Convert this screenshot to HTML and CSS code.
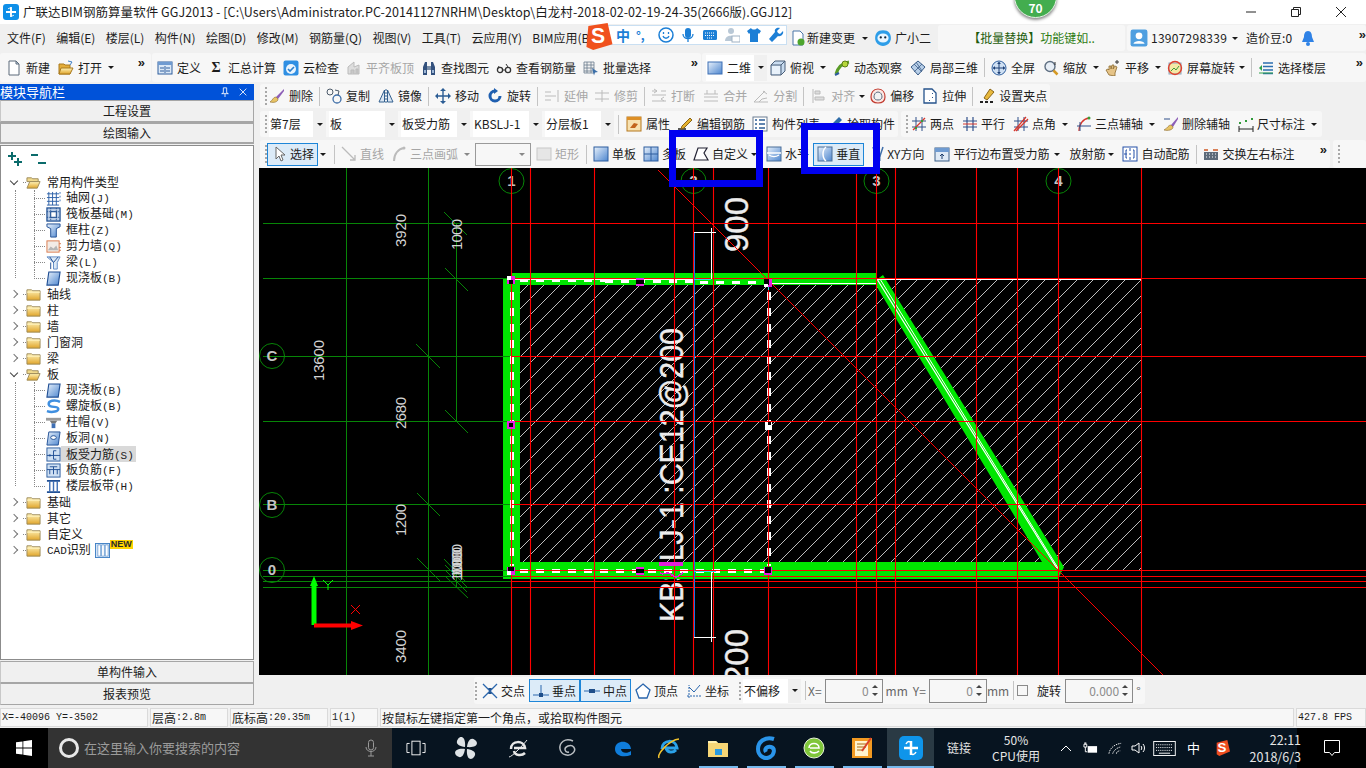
FILE: index.html
```html
<!DOCTYPE html>
<html lang="zh-CN">
<head>
<meta charset="utf-8">
<title>广联达BIM钢筋算量软件 GGJ2013</title>
<link rel="stylesheet" href="styles.css">
</head>
<body>
<svg class="defs" width="0" height="0">
<defs>
<linearGradient id="gy" x1="0" y1="0" x2="0" y2="1"><stop offset="0" stop-color="#fff3b8"/><stop offset="1" stop-color="#e0a52c"/></linearGradient>
<linearGradient id="gb" x1="0" y1="0" x2="1" y2="1"><stop offset="0" stop-color="#e8f1fb"/><stop offset="1" stop-color="#4d86cf"/></linearGradient>
<symbol id="doc" viewBox="0 0 16 16"><path d="M3 1h7l3 3v11H3z" fill="#fff" stroke="#5d6b7a"/><path d="M10 1v3h3z" fill="#c7d8ea" stroke="#5d6b7a"/></symbol>
<symbol id="open" viewBox="0 0 16 16"><path d="M1 4h5l1 1h5v9H1z" fill="#e3ad3a" stroke="#a97a1f"/><path d="M3 8h12l-3 6H1z" fill="url(#gy)" stroke="#a97a1f"/><path d="M10 1l4 1-2 3" fill="none" stroke="#3d7fc4"/></symbol>
<symbol id="def" viewBox="0 0 16 16"><rect x="1" y="2" width="14" height="12" fill="#dbe8f6" stroke="#2f5f9e"/><rect x="1" y="2" width="14" height="3" fill="#6f9bd1"/><path d="M3 8h4M3 11h4M9 8h4M9 11h4M8 6v7" stroke="#2f5f9e"/></symbol>
<symbol id="cloud" viewBox="0 0 16 16"><rect x="0.5" y="0.5" width="15" height="15" rx="2" fill="#2f8fe3"/><circle cx="8" cy="9" r="5" fill="#eaf4fd"/><path d="M5 9l2 2 4-4" fill="none" stroke="#2a7fcc" stroke-width="1.6"/></symbol>
<symbol id="gplane" viewBox="0 0 16 16"><path d="M2 14V7l6-5v5l5-2v9z" fill="#ddd" stroke="#bbb"/><path d="M5 14v-4h3v4M10 14v-5h2v5" fill="#c8c8c8" stroke="#bbb"/></symbol>
<symbol id="binoc" viewBox="0 0 16 16"><path d="M2 15V7l2-5h2v13zM14 15V7l-2-5h-2v13z" fill="#33517d"/><rect x="6" y="6" width="4" height="4" fill="#7a8ea8"/><rect x="3" y="10" width="2" height="3" fill="#9db6d6"/><rect x="11" y="10" width="2" height="3" fill="#9db6d6"/></symbol>
<symbol id="glass" viewBox="0 0 16 16"><circle cx="4" cy="10" r="2.6" fill="none" stroke="#333" stroke-width="1.3"/><circle cx="12" cy="10" r="2.6" fill="none" stroke="#333" stroke-width="1.3"/><path d="M6.5 10h3M12 7l-2-3M1.5 9L3 6" stroke="#333"/></symbol>
<symbol id="batch" viewBox="0 0 16 16"><path d="M1 2h10v11H1zM1 5h10M1 8h10M1 11h10M4 2v11M8 2v11" fill="#f2f2f2" stroke="#6a7b8e" stroke-width=".8"/><path d="M9 8l6 4-3 .5-1 3z" fill="#3a6ea8"/></symbol>
<symbol id="sq" viewBox="0 0 16 16"><rect x="1" y="2" width="14" height="12" fill="url(#gb)" stroke="#3d6fb4"/></symbol>
<symbol id="box3d" viewBox="0 0 16 16"><path d="M1 5l4-4h10v10l-4 4H1z" fill="#c9dcf0" stroke="#4a5f78"/><path d="M1 5h10v10M11 5l4-4" fill="none" stroke="#4a5f78"/><path d="M2 6h8v8H2z" fill="#e8f1fa"/></symbol>
<symbol id="orbit" viewBox="0 0 16 16"><path d="M2 14C4 7 9 3 15 2" fill="none" stroke="#5a9c26" stroke-width="3"/><circle cx="11" cy="4" r="3" fill="#b6d73a" stroke="#5d7d16"/><path d="M1 15l4-2" stroke="#2e5c9e" stroke-width="2"/></symbol>
<symbol id="local3" viewBox="0 0 16 16"><path d="M8 1l7 6-7 8-7-8z" fill="#b8cfe8" stroke="#3b5d88"/><path d="M4 4l8 8M12 4l-8 8M6 2l6 9" stroke="#3b5d88" stroke-width=".8"/></symbol>
<symbol id="full" viewBox="0 0 16 16"><circle cx="8" cy="8" r="7" fill="#cfe0f3" stroke="#2f5f9e"/><path d="M8 2v12M2 8h12" stroke="#1d3f75"/><path d="M8 2l-2 2h4zM8 14l-2-2h4zM2 8l2-2v4zM14 8l-2-2v4z" fill="#1d3f75"/></symbol>
<symbol id="zoomi" viewBox="0 0 16 16"><circle cx="7" cy="6.500" r="5" fill="#e7eef6" stroke="#5f6f82" stroke-width="1.400"/><path d="M10.500 10.500l4 4" stroke="#d59a25" stroke-width="2.500"/><path d="M12 2v3" stroke="#333"/></symbol>
<symbol id="pan" viewBox="0 0 16 16"><path d="M4 15l-3-5 2-1 1 1V6h2v3l1-4h2l-1 4 2-3 2 1-2 6v3z" fill="#e6c488" stroke="#8c6a2e" stroke-width=".8"/><path d="M12 0v4M10 2h4" stroke="#333"/></symbol>
<symbol id="rot" viewBox="0 0 16 16"><rect x="2" y="3" width="12" height="11" fill="#f4e9a6" stroke="#8ba2bc"/><circle cx="8" cy="8" r="6.500" fill="none" stroke="#e0402c" stroke-width="1.400"/><path d="M4 11l3-3 2 2 3-4" stroke="#3f9b3a" fill="none"/></symbol>
<symbol id="floor" viewBox="0 0 16 16"><path d="M5 3h10M5 6.500h10M5 10h10M5 13.500h10" stroke="#2c6fb0" stroke-width="1.600"/><path d="M1 8l3-3v6z" fill="#2fa04a"/><path d="M1 13h14" stroke="#2fa04a"/></symbol>
<symbol id="brush" viewBox="0 0 16 16"><path d="M15 1L7 9l2 2 6-8z" fill="#8d5fb7"/><path d="M7 9c-3 0-3 3-6 5 4 1 8 0 8-3z" fill="#e8c465" stroke="#8c6a2e" stroke-width=".6"/></symbol>
<symbol id="copy" viewBox="0 0 16 16"><circle cx="4" cy="4" r="3" fill="none" stroke="#4c5a6a"/><circle cx="11" cy="11" r="4" fill="none" stroke="#3f6ea8" stroke-width="1.300"/><path d="M9 2l4 1-1 4" fill="none" stroke="#4c5a6a"/></symbol>
<symbol id="mirror" viewBox="0 0 16 16"><path d="M6.500 2v12H1zM9.500 2v12H15z" fill="#dbe7f4" stroke="#33608f"/><path d="M8 1v14" stroke="#33608f" stroke-dasharray="2 1"/></symbol>
<symbol id="move" viewBox="0 0 16 16"><path d="M8 1v14M1 8h14" stroke="#2b5c94" stroke-width="1.400"/><path d="M8 0l-3 3h6zM8 16l-3-3h6zM0 8l3-3v6zM16 8l-3-3v6z" fill="#2b5c94"/></symbol>
<symbol id="rotate" viewBox="0 0 16 16"><path d="M13 8a5 5 0 1 1-5-5" fill="none" stroke="#1f5fb0" stroke-width="3"/><path d="M7 0v6l4-3z" fill="#1f5fb0"/></symbol>
<symbol id="gext" viewBox="0 0 16 16"><path d="M1 4h6M1 12h6M1 8h11M14 2v12" stroke="#bbb" fill="none"/></symbol>
<symbol id="gtrim" viewBox="0 0 16 16"><path d="M1 5h14M1 11h14M8 2v12" stroke="#bbb"/></symbol>
<symbol id="gbreak" viewBox="0 0 16 16"><path d="M1 3h5M10 3h5M1 7h14M3 1l3 2-3 2M13 9l-3 2 3 2M1 13h14" stroke="#bbb" fill="none"/></symbol>
<symbol id="gmerge" viewBox="0 0 16 16"><path d="M1 6h14M1 13h14M4 2v4M12 2v4M1 9h14" stroke="#bbb" fill="none"/></symbol>
<symbol id="gsplit" viewBox="0 0 16 16"><path d="M1 14L12 3M1 14h14M6 14l3-3 5-1" stroke="#bbb" fill="none"/><path d="M10 3l4 3" stroke="#bbb"/></symbol>
<symbol id="galign" viewBox="0 0 16 16"><path d="M2 1v14" stroke="#bbb"/><path d="M4 3h5v3H4zM4 9h9v3H4z" fill="#ddd" stroke="#bbb"/></symbol>
<symbol id="offset" viewBox="0 0 16 16"><path d="M8 1c5 0 7 4 7 8s-3 6-7 6-7-2-7-6 2-8 7-8z" fill="#fbe7e3" stroke="#c23b30" stroke-width="1.200"/><path d="M8 4c3 0 4 3 4 5s-2 3-4 3-4-1-4-3 1-5 4-5z" fill="#f2f2f2" stroke="#5b6d80"/></symbol>
<symbol id="stretch" viewBox="0 0 16 16"><path d="M2 1h8l4 4v10H2z" fill="#fff" stroke="#26538c" stroke-width="1.300"/><path d="M10 5h1v1H10zM10 9h1v1H10zM7 12h1v1H7z" fill="#26538c"/></symbol>
<symbol id="grip" viewBox="0 0 16 16"><path d="M11 1l4 3-7 8-3-2z" fill="#e8b93e" stroke="#8a6518"/><path d="M1 14h3M6 14h3M11 14h3" stroke="#222" stroke-width="2"/></symbol>
<symbol id="attr" viewBox="0 0 16 16"><rect x="1" y="1" width="14" height="14" fill="#f7e1b0" stroke="#b5791f"/><path d="M1 1h14v3H1z" fill="#dd8f26"/><path d="M4 12l4-5 4 1-3 4z" fill="#c2641d"/></symbol>
<symbol id="editbar" viewBox="0 0 16 16"><path d="M1 13h8" stroke="#222" stroke-width="1.500"/><path d="M13 2l2 2-8 8-3 1 1-3z" fill="#e7b32e" stroke="#8a6518"/></symbol>
<symbol id="list" viewBox="0 0 16 16"><rect x="1" y="1" width="14" height="14" fill="#fff" stroke="#6a7d92"/><path d="M3 4h2M3 8h2M3 12h2M7 4h6M7 8h6M7 12h6" stroke="#2c5d97" stroke-width="1.500"/></symbol>
<symbol id="pick" viewBox="0 0 16 16"><path d="M12 1l3 3-6 6-3-3z" fill="#2e6ca8"/><path d="M7 8l-4 6 6-4z" fill="#d7a236"/></symbol>
<symbol id="twopt" viewBox="0 0 16 16"><path d="M1 5h14M1 11h14M5 1v14M11 1v14" stroke="#31508a"/><path d="M2 14L14 2" stroke="#d8372c" stroke-width="1.200"/><path d="M4 11h2v2H4zM10 4h2v2h-2z" fill="#3b9c34"/></symbol>
<symbol id="para" viewBox="0 0 16 16"><path d="M1 5h14M1 11h14M5 1v14M11 1v14" stroke="#31508a" stroke-width="1.200"/><path d="M1 8h14" stroke="#d8372c"/></symbol>
<symbol id="angle" viewBox="0 0 16 16"><path d="M1 5h14M1 11h14M5 1v14M11 1v14" stroke="#31508a"/><path d="M1 15L13 1M3 15L15 3" stroke="#d8372c" stroke-width="1.300"/></symbol>
<symbol id="arcaxis" viewBox="0 0 16 16"><path d="M3 15C3 8 7 3 13 2" fill="none" stroke="#d8372c" stroke-width="1.300"/><path d="M1 10h14M4 6v9" stroke="#31508a"/><circle cx="13" cy="2" r="1.500" fill="#3b9c34"/></symbol>
<symbol id="delaxis" viewBox="0 0 16 16"><path d="M15 1L8 9l2 2 5-8z" fill="#8d5fb7"/><path d="M8 9c-3 0-3 3-7 5 4 1 9 0 9-3z" fill="#e8c465" stroke="#8c6a2e" stroke-width=".6"/><path d="M1 3h6" stroke="#31508a"/></symbol>
<symbol id="dimen" viewBox="0 0 16 16"><path d="M1 13h14M1 10v6M15 10v6" stroke="#222"/><path d="M1 6h2v2H1zM13 2h2v2h-2zM7 4h2v2H7z" fill="#2f9a3a"/></symbol>
<symbol id="arrowsel" viewBox="0 0 16 16"><path d="M5 1v12l3-3 2 5 2-1-2-5h4z" fill="#fff" stroke="#666"/></symbol>
<symbol id="gline" viewBox="0 0 16 16"><path d="M1 1l13 13M14 9v5H9" fill="none" stroke="#bbb" stroke-width="1.300"/></symbol>
<symbol id="garc" viewBox="0 0 16 16"><path d="M3 15C3 8 7 3 13 2" fill="none" stroke="#bbb" stroke-width="2"/><circle cx="13" cy="2" r="1.500" fill="#bbb"/></symbol>
<symbol id="grect" viewBox="0 0 16 16"><rect x="1" y="2" width="14" height="12" fill="#e6e6e6" stroke="#c8c8c8"/></symbol>
<symbol id="single" viewBox="0 0 16 16"><rect x="1" y="1" width="14" height="14" fill="url(#gb)" stroke="#2c5d9e"/></symbol>
<symbol id="multi" viewBox="0 0 16 16"><rect x="1" y="1" width="14" height="14" fill="url(#gb)" stroke="#2c5d9e"/><path d="M8 1v14M1 8h14" stroke="#2c5d9e"/></symbol>
<symbol id="custom" viewBox="0 0 16 16"><path d="M5 2h9l-3 5 4 7H1z" fill="#fff" stroke="#223" stroke-width="1.200"/></symbol>
<symbol id="horiz" viewBox="0 0 16 16"><rect x="1" y="1" width="14" height="14" fill="url(#gb)" stroke="#4b6e98"/><path d="M1 7h14M3 9c3 2 7 2 10 0" fill="none" stroke="#fff" stroke-width="1.300"/></symbol>
<symbol id="vert" viewBox="0 0 16 16"><rect x="1" y="1" width="14" height="14" fill="url(#gb)" stroke="#4b6e98"/><path d="M9 1C5 4 5 12 9 15" fill="none" stroke="#fff" stroke-width="1.500"/></symbol>
<symbol id="xy" viewBox="0 0 16 16"><path d="M3 1l3 9h4l3-9" fill="none" stroke="#3f6ea8" stroke-width="1.500"/><path d="M6 10v5M10 10v5" stroke="#3f6ea8"/></symbol>
<symbol id="pedge" viewBox="0 0 16 16"><rect x="1" y="2" width="14" height="13" fill="#dfeaf6" stroke="#3a5f88"/><rect x="1" y="2" width="14" height="4" fill="#6f9bd1"/><path d="M8 13V8M6 10l2-2 2 2" fill="none" stroke="#1f3f6c"/></symbol>
<symbol id="autob" viewBox="0 0 16 16"><rect x="1" y="1" width="14" height="14" fill="#fff" stroke="#2450a8"/><path d="M5 4H4v8h1M11 4h1v8h-1M8 2v3M8 7v2M8 11v3M2 8h3" fill="none" stroke="#2450a8"/></symbol>
<symbol id="swap" viewBox="0 0 16 16"><rect x="1" y="6" width="14" height="8" fill="#5d6b7a"/><path d="M3 8h1M6 8h1M9 8h1M12 8h1M3 11h1M6 11h1M9 11h1M12 11h1" stroke="#fff"/><path d="M1 4h4M10 4h5" stroke="#d05a24" stroke-width="1.400"/></symbol>
<symbol id="xpt" viewBox="0 0 16 16"><path d="M1 1l14 14M15 1L1 15" stroke="#2a66ad" stroke-width="1.300"/><path d="M6 5h4l-2 3zM6 11h4l-2-3z" fill="#1f4f8a"/></symbol>
<symbol id="ppt" viewBox="0 0 16 16"><path d="M0 12h16M8 2v10" stroke="#2a66ad"/><rect x="6" y="10" width="4" height="4" fill="#1f4f8a"/></symbol>
<symbol id="mpt" viewBox="0 0 16 16"><path d="M0 8h16" stroke="#2a66ad"/><rect x="5" y="6" width="6" height="4" fill="#1f4f8a"/></symbol>
<symbol id="tpt" viewBox="0 0 16 16"><path d="M8 1l7 6-3 8H4L1 7z" fill="#fff" stroke="#2a66ad" stroke-width="1.300"/></symbol>
<symbol id="cpt" viewBox="0 0 16 16"><path d="M3 15V2M1 13h14" stroke="#2a66ad" stroke-dasharray="2 1"/><path d="M8 9l6-7M8 9l-5-5" stroke="#2a66ad"/></symbol>
<symbol id="fclosed" viewBox="0 0 16 16"><path d="M1 3h5l1 1h8v10H1z" fill="url(#gy)" stroke="#9c8a5a"/><path d="M1 5.500h14" stroke="#fff4c4"/></symbol>
<symbol id="fopen" viewBox="0 0 16 16"><path d="M1 3h5l1 1h6v3H1z" fill="#f0d98c" stroke="#9c8a5a"/><path d="M4 7h11l-3 7H1z" fill="url(#gy)" stroke="#9c8a5a"/></symbol>
<symbol id="tgrid" viewBox="0 0 16 16"><path d="M1 3h13M1 7h13M1 11h13M1 15h13M3 1v14M7 1v14M11 1v14" stroke="#2b5fa8"/><path d="M14 1h2v2h-2zM14 5h2v2h-2zM14 9h2v2h-2z" fill="#9cb8dc"/></symbol>
<symbol id="traft" viewBox="0 0 16 16"><rect x="1" y="1" width="14" height="14" fill="#b9cde8" stroke="#1d4d90" stroke-width="1.300"/><rect x="5" y="5" width="6" height="6" fill="#fff" stroke="#1d4d90"/><path d="M1 5h14M1 11h14M5 1v14M11 1v14" stroke="#1d4d90" stroke-dasharray="1 1"/></symbol>
<symbol id="tcol" viewBox="0 0 16 16"><path d="M1 1h14v3l-4 2v9H5V6L1 4z" fill="url(#gb)" stroke="#204f94"/></symbol>
<symbol id="twall" viewBox="0 0 16 16"><rect x="1" y="2" width="13" height="12" fill="#f2ebe6" stroke="#d8784a"/><path d="M2 12l3-4 3 2 3-3 2 5z" fill="#b5b5b5"/><path d="M14 5h2M14 9h2M14 12h2" stroke="#d8784a"/></symbol>
<symbol id="tbeam" viewBox="0 0 16 16"><path d="M1 2h14l-3 6v7H8V8z" fill="#dbe8f6" stroke="#5d8ac4"/><path d="M4 2l4 6M13 2l-5 6M5 8v7" stroke="#204f94"/></symbol>
<symbol id="tslab" viewBox="0 0 16 16"><path d="M3 1h12l-2 14H1z" fill="url(#gb)" stroke="#204f94" stroke-width="1.200"/></symbol>
<symbol id="tspiral" viewBox="0 0 16 16"><path d="M15 3C9 0 2 2 3 6s9 1 10 4-6 5-12 3" fill="none" stroke="#3f8fe0" stroke-width="2.600"/></symbol>
<symbol id="tcap" viewBox="0 0 16 16"><path d="M0 3h16v3H0z" fill="#9b9b9b"/><path d="M4 6h8l-2 3H6z" fill="#777"/><rect x="6" y="9" width="4" height="5" fill="#3f6fb4"/></symbol>
<symbol id="thole" viewBox="0 0 16 16"><path d="M3 1h12l-2 14H1z" fill="url(#gb)" stroke="#204f94"/><ellipse cx="8" cy="7" rx="3" ry="2" fill="#fff" stroke="#204f94"/></symbol>
<symbol id="tbar" viewBox="0 0 16 16"><rect x="1" y="1" width="14" height="14" fill="#cfe0f3" stroke="#2c5d9e"/><path d="M1 9h14M11 4H8v9h3" fill="none" stroke="#204f94"/><path d="M3 9h2" stroke="#204f94" stroke-width="2"/></symbol>
<symbol id="tneg" viewBox="0 0 16 16"><rect x="1" y="1" width="14" height="14" fill="#cfe0f3" stroke="#2c5d9e"/><path d="M1 7h14M4 4h8M4 7v5M12 7v5M8 4v8" fill="none" stroke="#204f94"/></symbol>
<symbol id="tband" viewBox="0 0 16 16"><path d="M1 2h14M1 14h14" stroke="#204f94" stroke-width="2"/><path d="M4 2v12M8 2v12M12 2v12" stroke="#3f6fb4" stroke-width="1.500"/></symbol>
<symbol id="tcad" viewBox="0 0 16 16"><rect x=".5" y=".5" width="15" height="15" fill="#d6e6f7" stroke="#3f7fc4"/><path d="M3 2v12h3V2zM7 2v12h3V2zM11 2v12h3V2z" fill="#fff" stroke="#3f7fc4" stroke-width=".6"/></symbol>
</defs>
</svg>

<div class="page">
  <header class="titlebar">
    <svg class="appicon" viewBox="0 0 16 16"><rect width="16" height="16" rx="3" fill="#0e8fe8"/><path d="M8 3v10M3 8h10" stroke="#fff" stroke-width="1.800"/><path d="M5 5c2-2 4 0 3 2M11 11c-2 2-4 0-3-2" fill="none" stroke="#fff"/></svg>
    <span class="title-text">广联达BIM钢筋算量软件 GGJ2013 - [C:\Users\Administrator.PC-20141127NRHM\Desktop\白龙村-2018-02-02-19-24-35(2666版).GGJ12]</span>
    <div class="winctl">
      <svg class="wc" viewBox="0 0 12 12"><path d="M1 6h10" stroke="#222"/></svg>
      <svg class="wc" viewBox="0 0 12 12"><path d="M1.500 3.500h7v7h-7zM3.500 3.500v-2h7v7h-2" fill="none" stroke="#222"/></svg>
      <svg class="wc" viewBox="0 0 12 12"><path d="M1 1l10 10M11 1L1 11" stroke="#222"/></svg>
    </div>
    <div class="badge"><span>70</span></div>
  </header>

  <nav class="menubar">
    <div class="menus">
      <span>文件(F)</span><span>编辑(E)</span><span>楼层(L)</span><span>构件(N)</span><span>绘图(D)</span><span>修改(M)</span><span>钢筋量(Q)</span><span>视图(V)</span><span>工具(T)</span><span>云应用(Y)</span><span>BIM应用(B)</span>
    </div>
    <div class="menu-right">
      <div class="tool newchg"><svg class="ic" viewBox="0 0 16 16"><path d="M3 1h7l3 3v11H3z" fill="#fff" stroke="#4b76a8"/><circle cx="11" cy="12" r="3.500" fill="#4da52c"/></svg><span>新建变更</span><i class="dd"></i></div>
      <div class="tool xiaoer"><svg class="ic big" viewBox="0 0 16 16"><path d="M8 1c5 0 7 3 7 7s-3 7-7 7-7-3-7-7 2-7 7-7z" fill="#2d9de8"/><ellipse cx="8" cy="8" rx="5" ry="4" fill="#eaf6ff"/><circle cx="6" cy="7.500" r="1" fill="#123"/><circle cx="10" cy="7.500" r="1" fill="#123"/></svg><span>广小二</span></div>
      <div class="notice"><b>【批量替换】</b>功能键如..</div>
      <div class="account">
        <svg class="ic big" viewBox="0 0 16 16"><rect x=".5" y=".5" width="15" height="15" rx="2" fill="#4f9fe0"/><circle cx="8" cy="6" r="3" fill="#fff"/><path d="M3 13c1-3 9-3 10 0z" fill="#fff"/></svg>
        <span class="phone">13907298339</span><i class="dd"></i>
        <span class="beans">造价豆:0</span>
        <svg class="bell" viewBox="0 0 12 16"><path d="M6 1c3 0 4 3 4 6l2 5H0l2-5c0-3 1-6 4-6z" fill="#2f82e6"/><circle cx="6" cy="14" r="2" fill="#2f82e6"/></svg>
        <span class="more">»</span>
      </div>
    </div>
    <div class="ime">
      <svg class="ime-s" viewBox="0 0 30 28"><path d="M5 3l20-3 5 22-20 6-7-3z" fill="#f0511e"/><text x="15" y="21" class="ime-s-t">S</text></svg>
      <span class="ime-zh">中</span><span class="ime-p">°,</span>
      <svg class="ime-i" viewBox="0 0 16 16"><circle cx="8" cy="8" r="7" fill="none" stroke="#1c7fd6" stroke-width="1.500"/><path d="M5 9c1 3 5 3 6 0" fill="none" stroke="#1c7fd6" stroke-width="1.300"/><path d="M5.500 5v2M10.500 5v2" stroke="#1c7fd6" stroke-width="1.300"/></svg>
      <svg class="ime-i" viewBox="0 0 16 16"><rect x="5" y="1" width="6" height="10" rx="3" fill="#1c7fd6"/><path d="M3 7c0 6 10 6 10 0M8 12v3" fill="none" stroke="#1c7fd6" stroke-width="1.300"/></svg>
      <svg class="ime-i" viewBox="0 0 16 16"><rect x="1" y="3" width="14" height="10" rx="1.500" fill="#1c7fd6"/><path d="M3 6h10M3 8.500h10M5 11h6" stroke="#fff" stroke-dasharray="1 1"/></svg>
      <svg class="ime-i" viewBox="0 0 16 16"><circle cx="7" cy="4" r="3" fill="#b9c8d6"/><path d="M1 14c0-7 11-7 11 0z" fill="#b9c8d6"/><rect x="8" y="9" width="8" height="6" fill="#fff" stroke="#9fb1c3"/></svg>
      <svg class="ime-i" viewBox="0 0 16 16"><path d="M5 1L1 4l2 3 1-1v9h8V6l1 1 2-3-4-3c-1 2-5 2-6 0z" fill="#1c7fd6"/></svg>
      <svg class="ime-i" viewBox="0 0 16 16"><path d="M15 4l-3 3-2-1-1-2 3-3c-3-1-6 1-5 4L1 12l3 3 6-6c3 1 6-2 5-5z" fill="#1c7fd6"/></svg>
    </div>
  </nav>

  <div class="toolbar-top">
    <div class="chip c1">
      <div class="tool"><svg class="ic"><use href="#doc"/></svg><span>新建</span></div>
      <div class="tool"><svg class="ic"><use href="#open"/></svg><span>打开</span><i class="dd"></i></div>
      <span class="more">»</span>
    </div>
    <div class="chip c2">
      <div class="tool"><svg class="ic"><use href="#def"/></svg><span>定义</span></div>
      <div class="tool"><span class="sigma">Σ</span><span>汇总计算</span></div>
      <div class="tool"><svg class="ic"><use href="#cloud"/></svg><span>云检查</span></div>
      <div class="tool off"><svg class="ic"><use href="#gplane"/></svg><span>平齐板顶</span></div>
      <div class="tool"><svg class="ic"><use href="#binoc"/></svg><span>查找图元</span></div>
      <div class="tool"><svg class="ic"><use href="#glass"/></svg><span>查看钢筋量</span></div>
      <div class="tool"><svg class="ic"><use href="#batch"/></svg><span>批量选择</span></div>
      <span class="more">»</span>
    </div>
    <div class="chip c3">
      <div class="tool sel2d"><svg class="ic"><use href="#sq"/></svg><span>二维</span></div><span class="ddbox"><i class="dd"></i></span>
      <div class="tool"><svg class="ic"><use href="#box3d"/></svg><span>俯视</span><i class="dd"></i></div>
      <div class="tool"><svg class="ic"><use href="#orbit"/></svg><span>动态观察</span></div>
      <div class="tool"><svg class="ic"><use href="#local3"/></svg><span>局部三维</span></div>
      <i class="sep"></i>
      <div class="tool"><svg class="ic"><use href="#full"/></svg><span>全屏</span></div>
      <div class="tool"><svg class="ic"><use href="#zoomi"/></svg><span>缩放</span><i class="dd"></i></div>
      <div class="tool mln2"><svg class="ic"><use href="#pan"/></svg><span>平移</span><i class="dd"></i></div>
      <div class="tool mln2"><svg class="ic"><use href="#rot"/></svg><span>屏幕旋转</span><i class="dd tight"></i></div>
      <i class="sep"></i>
      <div class="tool"><svg class="ic"><use href="#floor"/></svg><span>选择楼层</span></div>
      <span class="more">»</span>
    </div>
  </div>

  <main class="main">
    <aside class="left">
      <div class="panel-head"><span>模块导航栏</span>
        <svg class="pin" viewBox="0 0 12 12"><path d="M4 1h4v6l2 1H2l2-1zM6 8v4" fill="none" stroke="#fff"/></svg>
        <svg class="pin" viewBox="0 0 12 12"><path d="M2 2l8 8M10 2l-8 8" stroke="#fff"/></svg>
      </div>
      <button class="nav-btn">工程设置</button>
      <button class="nav-btn cur">绘图输入</button>
      <div class="treebox">
        <div class="tree-tools">
          <svg class="tt" viewBox="0 0 16 16"><path d="M5 1v8M1 5h8M11 7v8M7 11h8" stroke="#0b6b6b" stroke-width="2"/></svg>
          <svg class="tt" viewBox="0 0 16 16"><path d="M1 4h7M8 12h8" stroke="#0b6b6b" stroke-width="2"/></svg>
        </div>
        <div class="tree">
          <div class="row folder"><i class="chev down"></i><svg class="ti"><use href="#fopen"/></svg><span>常用构件类型</span></div>
          <div class="group">
            <div class="row child"><svg class="ti"><use href="#tgrid"/></svg><span>轴网<em>(J)</em></span></div>
            <div class="row child"><svg class="ti"><use href="#traft"/></svg><span>筏板基础<em>(M)</em></span></div>
            <div class="row child"><svg class="ti"><use href="#tcol"/></svg><span>框柱<em>(Z)</em></span></div>
            <div class="row child"><svg class="ti"><use href="#twall"/></svg><span>剪力墙<em>(Q)</em></span></div>
            <div class="row child"><svg class="ti"><use href="#tbeam"/></svg><span>梁<em>(L)</em></span></div>
            <div class="row child last"><svg class="ti"><use href="#tslab"/></svg><span>现浇板<em>(B)</em></span></div>
          </div>
          <div class="row folder"><i class="chev"></i><svg class="ti"><use href="#fclosed"/></svg><span>轴线</span></div>
          <div class="row folder"><i class="chev"></i><svg class="ti"><use href="#fclosed"/></svg><span>柱</span></div>
          <div class="row folder"><i class="chev"></i><svg class="ti"><use href="#fclosed"/></svg><span>墙</span></div>
          <div class="row folder"><i class="chev"></i><svg class="ti"><use href="#fclosed"/></svg><span>门窗洞</span></div>
          <div class="row folder"><i class="chev"></i><svg class="ti"><use href="#fclosed"/></svg><span>梁</span></div>
          <div class="row folder"><i class="chev down"></i><svg class="ti"><use href="#fopen"/></svg><span>板</span></div>
          <div class="group">
            <div class="row child"><svg class="ti"><use href="#tslab"/></svg><span>现浇板<em>(B)</em></span></div>
            <div class="row child"><svg class="ti"><use href="#tspiral"/></svg><span>螺旋板<em>(B)</em></span></div>
            <div class="row child"><svg class="ti"><use href="#tcap"/></svg><span>柱帽<em>(V)</em></span></div>
            <div class="row child"><svg class="ti"><use href="#thole"/></svg><span>板洞<em>(N)</em></span></div>
            <div class="row child hl"><svg class="ti"><use href="#tbar"/></svg><span>板受力筋<em>(S)</em></span></div>
            <div class="row child"><svg class="ti"><use href="#tneg"/></svg><span>板负筋<em>(F)</em></span></div>
            <div class="row child last"><svg class="ti"><use href="#tband"/></svg><span>楼层板带<em>(H)</em></span></div>
          </div>
          <div class="row folder"><i class="chev"></i><svg class="ti"><use href="#fclosed"/></svg><span>基础</span></div>
          <div class="row folder"><i class="chev"></i><svg class="ti"><use href="#fclosed"/></svg><span>其它</span></div>
          <div class="row folder"><i class="chev"></i><svg class="ti"><use href="#fclosed"/></svg><span>自定义</span></div>
          <div class="row folder"><i class="chev"></i><svg class="ti"><use href="#fclosed"/></svg><span><em>CAD</em>识别</span><svg class="ti cad"><use href="#tcad"/></svg><b class="new">NEW</b></div>
        </div>
      </div>
      <button class="nav-btn foot">单构件输入</button>
      <button class="nav-btn foot">报表预览</button>
    </aside>

    <section class="right">
      <div class="chip rowa">
        <i class="gripper"></i>
        <div class="tool"><svg class="ic"><use href="#brush"/></svg><span>删除</span></div><i class="sep"></i>
        <div class="tool"><svg class="ic"><use href="#copy"/></svg><span>复制</span></div>
        <div class="tool"><svg class="ic"><use href="#mirror"/></svg><span>镜像</span></div><i class="sep"></i>
        <div class="tool"><svg class="ic"><use href="#move"/></svg><span>移动</span></div>
        <div class="tool"><svg class="ic"><use href="#rotate"/></svg><span>旋转</span></div><i class="sep"></i>
        <div class="tool off"><svg class="ic"><use href="#gext"/></svg><span>延伸</span></div>
        <div class="tool off mln2"><svg class="ic"><use href="#gtrim"/></svg><span>修剪</span></div><i class="sep"></i>
        <div class="tool off"><svg class="ic"><use href="#gbreak"/></svg><span>打断</span></div>
        <div class="tool off"><svg class="ic"><use href="#gmerge"/></svg><span>合并</span></div>
        <div class="tool off mln2"><svg class="ic"><use href="#gsplit"/></svg><span>分割</span></div><i class="sep"></i>
        <div class="tool off ml1"><svg class="ic"><use href="#galign"/></svg><span>对齐</span><i class="dd tight"></i></div>
        <div class="tool mln3"><svg class="ic"><use href="#offset"/></svg><span>偏移</span></div>
        <div class="tool"><svg class="ic"><use href="#stretch"/></svg><span>拉伸</span></div><i class="sep"></i>
        <div class="tool"><svg class="ic"><use href="#grip"/></svg><span>设置夹点</span></div>
      </div>

      <div class="rowb">
        <div class="chip rowb1">
          <i class="gripper"></i>
          <div class="combo"><span>第7层</span><span class="ddbox"><i class="dd"></i></span></div>
          <div class="combo wide"><span>板</span><span class="ddbox"><i class="dd"></i></span></div>
          <div class="combo wide"><span>板受力筋</span><span class="ddbox"><i class="dd"></i></span></div>
          <div class="combo wide"><span>KBSLJ-1</span><span class="ddbox"><i class="dd"></i></span></div>
          <div class="combo wide"><span>分层板1</span><span class="ddbox"><i class="dd"></i></span></div>
          <i class="sep b"></i>
          <div class="tool"><svg class="ic"><use href="#attr"/></svg><span>属性</span></div>
          <div class="tool"><svg class="ic"><use href="#editbar"/></svg><span>编辑钢筋</span></div>
          <div class="tool"><svg class="ic"><use href="#list"/></svg><span>构件列表</span></div>
          <div class="tool"><svg class="ic"><use href="#pick"/></svg><span>拾取构件</span></div>
        </div>
        <div class="chip rowb2">
          <i class="gripper"></i>
          <div class="tool"><svg class="ic"><use href="#twopt"/></svg><span>两点</span></div>
          <div class="tool"><svg class="ic"><use href="#para"/></svg><span>平行</span></div>
          <div class="tool"><svg class="ic"><use href="#angle"/></svg><span>点角</span><i class="dd"></i></div>
          <div class="tool"><svg class="ic"><use href="#arcaxis"/></svg><span>三点辅轴</span><i class="dd"></i></div>
          <div class="tool"><svg class="ic"><use href="#delaxis"/></svg><span>删除辅轴</span></div>
          <div class="tool"><svg class="ic"><use href="#dimen"/></svg><span>尺寸标注</span><i class="dd"></i></div>
        </div>
      </div>

      <div class="rowc">
        <div class="chip rowc1">
          <i class="gripper"></i>
          <div class="tool btn sel first"><svg class="ic"><use href="#arrowsel"/></svg><span>选择</span></div><i class="dd"></i>
          <i class="sep"></i>
          <div class="tool off"><svg class="ic"><use href="#gline"/></svg><span>直线</span></div>
          <div class="tool off"><svg class="ic"><use href="#garc"/></svg><span>三点画弧</span><i class="dd grey"></i></div>
          <div class="blank"><i class="dd grey"></i></div>
          <div class="tool off"><svg class="ic"><use href="#grect"/></svg><span>矩形</span></div><i class="sep"></i>
          <div class="tool"><svg class="ic"><use href="#single"/></svg><span>单板</span></div>
          <div class="tool"><svg class="ic"><use href="#multi"/></svg><span>多板</span></div>
          <div class="tool"><svg class="ic"><use href="#custom"/></svg><span>自定义</span><i class="dd tight"></i></div>
          <div class="tool ml2"><svg class="ic"><use href="#horiz"/></svg><span>水平</span></div>
          <div class="tool btn sel vbtn"><svg class="ic"><use href="#vert"/></svg><span>垂直</span></div>
          <div class="tool"><svg class="ic xyic"><use href="#xy"/></svg><span>XY方向</span></div>
          <div class="tool ml3"><svg class="ic"><use href="#pedge"/></svg><span>平行边布置受力筋</span><i class="dd"></i></div>
          <div class="tool ml2"><span>放射筋</span><i class="dd tight"></i></div>
          <div class="tool ml1"><svg class="ic"><use href="#autob"/></svg><span>自动配筋</span></div><i class="sep"></i>
          <div class="tool"><svg class="ic"><use href="#swap"/></svg><span>交换左右标注</span></div>
          <span class="more">»</span>
        </div>
        <div class="chip rowc2"><i class="gripper"></i></div>
      </div>

      <svg class="canvas" viewBox="259 168 1107 507">
        <defs>
          <pattern id="hatch" patternUnits="userSpaceOnUse" width="16" height="16" patternTransform="translate(13 0)"><path class="crisp" d="M-1 17L17 -1M-1 1L1 -1M15 17L17 15" stroke="#bdbdbd" stroke-width="1"/></pattern>
        </defs>
        <rect x="259" y="168" width="1107" height="507" fill="#000"/>
        <path d="M511 279H1141V570H511z" fill="url(#hatch)"/>
        <text class="bigt" transform="translate(683 622) rotate(-90)" textLength="294" lengthAdjust="spacingAndGlyphs">KBSLJ-1 :CE12@200</text>
        <text class="bigt" transform="translate(748 252) rotate(-90)">900</text>
        <text class="bigt" transform="translate(748 684) rotate(-90)">200</text>

        <path class="gband" d="M511 273H877V285H520V562H1042L877 287L876 280L883 275L1064 567L1058 579H503V279H511z"/>

        <g class="glines">
          <path d="M263 223.500H511M263 278.500H511M263 356.500H511M263 421.500H511M263 504.500H511M263 570.500H511M263 576.500H511M263 581.500H511M263 587.500H511"/>
          <path d="M346.500 168V675M428.500 168V675M456.500 223V421M456.500 570V587"/>
        </g>
        <g class="ticks">
          <path d="M444 212L467 235M445 268L468 291M445 410L468 433M416 344L440 368M417 493L440 516M417 558L441 582M444 559L466 582M445 565L468 588M445 570L467 592M445 576L468 598"/>
        </g>
        <g class="bubble">
          <circle cx="511.500" cy="181" r="12.500"/><circle cx="693.500" cy="181" r="12.500"/><circle cx="876.500" cy="181" r="12.500"/><circle cx="1058.500" cy="181" r="12.500"/>
          <circle cx="272" cy="356" r="12.500"/><circle cx="272" cy="505" r="12.500"/><circle cx="272" cy="570" r="12.500"/>
        </g>
        <g class="blabel">
          <text x="511.500" y="186">1</text><text x="693.500" y="186">2</text><text x="876.500" y="186">3</text><text x="1058.500" y="186">4</text>
          <text x="272" y="361">C</text><text x="272" y="510">B</text><text x="272" y="575">0</text>
        </g>
        <g class="dim">
          <text transform="translate(406 247) rotate(-90)" textLength="33">3920</text>
          <text transform="translate(462 250) rotate(-90)" textLength="31">1000</text>
          <text transform="translate(324 381) rotate(-90)" textLength="41">13600</text>
          <text transform="translate(406 429) rotate(-90)" textLength="32">2680</text>
          <text transform="translate(406 536) rotate(-90)" textLength="32">1200</text>
          <text transform="translate(406 663) rotate(-90)" textLength="33">3400</text>
          <text transform="translate(462 575) rotate(-90)" textLength="31">1000</text>
          <text transform="translate(462 578) rotate(-90)" textLength="31">1000</text>
          <text transform="translate(462 581) rotate(-90)" textLength="31">1000</text>
        </g>

        <g class="crisp">
          <path class="wsolid" d="M877 279.500H1141.500V570.500H1058M768 283.500H877M768 570.500H1058M511.500 281V571M511 279.500H700M511 570.500H768"/>
          <path class="wdash" d="M511.500 292V566M768.500 292V566"/>
          <path class="wdash" d="M520 570.500H764"/>
          <path class="wdash2" d="M520 280.500H605M605 281.500H700M700 282.500H764"/>
        </g>
        <path class="wdiag" d="M877 279L1058 570"/>
        <path class="wdiag2" d="M880 279L1058 568"/>

        <g class="rlines">
          <path d="M511.500 168V675M530.500 168V675M594.500 168V675M674.500 168V675M693.500 168V675M713.500 168V675M768.500 168V675M856.500 168V675M876.500 168V675M895.500 168V675M976.500 168V675M1017.500 168V675M1058.500 168V675M1141.500 168V675"/>
          <path d="M511 223.500H1366M511 278.500H1366M511 356.500H1366M511 421.500H1366M511 504.500H1366M511 570.500H1366M511 576.500H1366M511 581.500H1366M511 587.500H1366"/>
        </g>
        <path class="rdiag" d="M658 170L1163 675"/>

        <g class="crisp">
          <path class="blueline" d="M694.500 232V638"/>
          <path class="whitethin" d="M694 232.500H711.500V279M711.500 572V637.500H694"/>
          <path class="whitethin" d="M707 232.500H716M711.500 228V237M707 637.500H716M711.500 633V642"/>
          <path class="cyan" d="M694 279.500H711M694 571.500H716M768.500 280V290M768.500 423V430"/>
          <rect class="mg" x="659" y="562" width="24" height="4"/>
          <path class="mgs" d="M660 573c4 3 8-3 12 2s8-1 11-2"/>
        </g>
        <g class="crisp marks">
          <g transform="translate(507 276)"><rect width="8" height="8"/><rect class="wt" width="4" height="4"/><rect class="bk" x="2" y="4" width="4" height="4"/></g>
          <g transform="translate(636 278)"><rect width="8" height="8"/><rect class="bk" y="2" width="8" height="4"/></g>
          <g transform="translate(764 279)"><rect width="8" height="8"/><rect class="bk" width="5" height="6"/><rect class="wt" y="5" width="4" height="3"/></g>
          <g transform="translate(507 421)"><rect width="8" height="8"/><rect class="bk" x="2" y="2" width="4" height="4"/></g>
          <g transform="translate(765 422)"><rect class="wt" width="7" height="8"/><rect class="bk" x="3" width="3" height="3"/></g>
          <g transform="translate(507 567)"><rect width="8" height="8"/><rect class="bk" x="1" width="6" height="4"/><rect class="wt" y="4" width="4" height="4"/></g>
          <g transform="translate(636 567)"><rect width="8" height="8"/><rect class="bk" y="2" width="8" height="4"/></g>
          <g transform="translate(764 567)"><rect width="8" height="8"/><rect class="bk" x="1" width="6" height="6"/></g>
        </g>

        <path class="ax-g" d="M314 625V586"/><path class="ax-gh" d="M314 576L310 586H318z"/>
        <path class="ax-r" d="M314 625.500H352"/><path class="ax-rh" d="M363 625.500L351 621V630z"/>
        <path class="ax-yl" d="M323 580L328 585L333 580M328 585V590"/>
        <path class="ax-xl" d="M351 605L360 614M360 605L351 614"/>
      </svg>

      <div class="snapbar">
        <div class="chip snap">
          <i class="gripper"></i>
          <div class="tool"><svg class="ic"><use href="#xpt"/></svg><span>交点</span></div>
          <div class="tool btn sel"><svg class="ic"><use href="#ppt"/></svg><span>垂点</span></div>
          <div class="tool btn sel join"><svg class="ic"><use href="#mpt"/></svg><span>中点</span></div>
          <div class="tool"><svg class="ic"><use href="#tpt"/></svg><span>顶点</span></div>
          <div class="tool coord"><svg class="ic"><use href="#cpt"/></svg><span>坐标</span></div>
          <i class="gripper g2"></i>
          <div class="combo off-c"><span>不偏移</span><span class="ddbox"><i class="dd"></i></span></div>
          <i class="sep"></i>
          <span class="lab">X=</span>
          <div class="spin"><span>0</span><span class="arrows"><i class="up"></i><i class="dn"></i></span></div>
          <span class="lab">mm</span><span class="lab y">Y=</span>
          <div class="spin"><span>0</span><span class="arrows"><i class="up"></i><i class="dn"></i></span></div>
          <span class="lab mm2">mm</span>
          <i class="sep"></i>
          <span class="check"></span>
          <span class="rotlab">旋转</span>
          <div class="spin w3"><span>0.000</span><span class="arrows"><i class="up"></i><i class="dn"></i></span></div>
          <span class="lab">°</span>
        </div>
      </div>
    </section>
  </main>

  <div class="statusbar">
    <span class="cell s1"><em>X=-40096 Y=-3502</em></span>
    <span class="cell s2">层高<em>:2.8m</em></span>
    <span class="cell s3">底标高<em>:20.35m</em></span>
    <span class="cell s4"><em>1(1)</em></span>
    <span class="cell s5">按鼠标左键指定第一个角点，或拾取构件图元</span>
    <span class="cell s6"><em>427.8 FPS</em></span>
  </div>

  <footer class="taskbar">
    <div class="startbtn"><svg viewBox="0 0 16 16" class="winlogo"><path d="M0 2.300l6.500-.9v6.200H0zM7.300 1.300L16 0v7.600H7.300zM0 8.400h6.500v6.200L0 13.700zM7.300 8.400H16V16l-8.700-1.200z" fill="#fff"/></svg></div>
    <div class="searchbox">
      <i class="cortana"></i><span>在这里输入你要搜索的内容</span>
      <svg class="mic" viewBox="0 0 12 18"><rect x="3.500" y="1" width="5" height="10" rx="2.500" fill="none" stroke="#9a9a9a"/><path d="M1 8c0 6 10 6 10 0M6 13v4M3 17h6" fill="none" stroke="#9a9a9a"/></svg>
    </div>
    <div class="tasks">
      <span class="task"><svg viewBox="0 0 22 18" class="t18"><rect x="6.500" y="1.500" width="9" height="15" fill="none" stroke="#fff"/><path d="M4 4H1v10h3M18 4h3v10h-3" fill="none" stroke="#fff"/></svg></span>
      <span class="task w52"><svg viewBox="0 0 22 22" class="t22"><path d="M10 10C3 9 0 6 3 2s8-2 7 8zM12 10c1-7 4-10 8-7s2 8-8 7zM12 12c7 1 10 4 7 8s-8 2-7-8zM10 12c-1 7-4 10-8 7s-2-8 8-7z" fill="#dfe3e6"/></svg></span>
      <span class="task w52"><svg viewBox="0 0 22 22" class="t22"><path d="M4 12c0-9 13-9 14-1H7M7 14c1 5 8 5 11 2" fill="none" stroke="#e8e8e8" stroke-width="2.500"/><path d="M2 20C5 20 17 7 20 3" fill="none" stroke="#e8e8e8"/></svg></span>
      <span class="task w46"><svg viewBox="0 0 22 22" class="t22"><path d="M17 4C9 0 3 6 4 12s9 8 13 4 0-9-5-7-3 7 1 6" fill="none" stroke="#b9bec2" stroke-width="1.500"/></svg></span>
      <span class="task w66"><svg viewBox="0 0 22 22" class="t22"><path d="M3 12c0-9 15-10 16 0H9c0 4 6 5 10 2v4c-7 3-16 1-16-6z" fill="#0f7ddb"/></svg></span>
      <span class="task w26"><svg viewBox="0 0 24 24" class="t24"><path d="M5 13c0-10 14-10 15-1H9c1 5 7 5 10 2" fill="none" stroke="#2ba2e8" stroke-width="3"/><path d="M2 22c-2-4 10-18 20-19" fill="none" stroke="#f0c22e" stroke-width="1.500"/></svg></span>
      <span class="task acc"><svg viewBox="0 0 22 22" class="t22"><path d="M1 4h8l2 2h10v14H1z" fill="#f6d676"/><rect x="8" y="12" width="7" height="6" fill="#2a9ae0"/><path d="M1 4h8l2 2H1z" fill="#fff0b0"/></svg></span>
      <span class="task acc"><svg viewBox="0 0 22 24" class="t24"><path d="M19 3C10 0 3 6 3 13s7 11 12 8 5-9 1-10-7 2-5 5" fill="none" stroke="#2a95ea" stroke-width="4"/></svg></span>
      <span class="task acc"><svg viewBox="0 0 22 24" class="t24"><circle cx="11" cy="12" r="10" fill="#7fc63a" stroke="#e8f2d8"/><path d="M6 12c0-6 10-6 10 0H7M7 15c2 3 7 2 9 0" fill="none" stroke="#fff" stroke-width="1.600"/></svg></span>
      <span class="task acc"><svg viewBox="0 0 22 24" class="t24"><rect x="1" y="2" width="20" height="20" fill="#f29a22"/><rect x="4" y="5" width="13" height="15" fill="#fff3cf"/><path d="M6 8h9M6 11h9M6 14h6" stroke="#a86a14"/><path d="M20 2L11 15" stroke="#d9412a" stroke-width="2"/></svg></span>
      <span class="task acc cur"><svg viewBox="0 0 24 24" class="t24"><rect width="24" height="24" rx="5" fill="#0f95ea"/><path d="M12 5v14M5 12h14" stroke="#fff" stroke-width="2.500"/><path d="M7 8c2-4 6-3 5 2M17 16c-2 4-6 3-5-2" fill="none" stroke="#fff" stroke-width="1.500"/></svg></span>
    </div>
    <span class="link">链接</span>
    <div class="cpu"><span>50%</span><span>CPU使用</span></div>
    <div class="tray">
      <svg viewBox="0 0 12 8" class="tr chev-up"><path d="M1 7l5-5 5 5" fill="none" stroke="#fff"/></svg>
      <svg viewBox="0 0 16 14" class="tr w15"><rect x="5" y="5" width="10" height="7" fill="#fff"/><path d="M1 3h3v3H1zM2 1v2M3 1v2M2.500 6v5h2" stroke="#fff" fill="none"/></svg>
      <svg viewBox="0 0 16 14" class="tr w15 wifi"><path d="M1 13C2 7 7 3 14 2M5 13C6 10 9 7 13 6M9 13c0-2 2-3 4-3" fill="none" stroke="#fff" stroke-dasharray="1.500 1"/></svg>
      <svg viewBox="0 0 14 14" class="tr"><path d="M1 5h3l4-3v10L4 9H1z" fill="none" stroke="#fff"/><path d="M10 5c1 1 1 3 0 4M12 3c2 2 2 6 0 8" fill="none" stroke="#fff"/></svg>
      <svg viewBox="0 0 24 16" class="tr kb"><rect x=".5" y=".5" width="23" height="15" fill="none" stroke="#fff"/><path d="M3 4h18M3 7h18M3 10h18" stroke="#fff" stroke-dasharray="1 1"/><path d="M6 13h12" stroke="#fff"/></svg>
      <span class="zh">中</span>
      <svg viewBox="0 0 18 18" class="tr sg"><path d="M3 3l12-3 3 13-12 5-3-2z" fill="#ee4d1f"/><text x="9" y="14" class="ime-s-t small">S</text></svg>
    </div>
    <div class="clock"><span>22:11</span><span>2018/6/3</span></div>
    <div class="notif"><svg viewBox="0 0 18 18" class="t18"><path d="M1.500 1.500h15v12h-5l-2.500 3-2.500-3h-5z" fill="none" stroke="#fff"/></svg></div>
  </footer>

  <i class="mark m1"></i>
  <i class="mark m2"></i>
</div>
</body>
</html>
```

FILE: styles.css
```css
* { box-sizing: border-box; }
html, body { margin: 0; padding: 0; }
body { width: 1366px; height: 768px; overflow: hidden; background: #f0f0f0; color: #1c1c1c;
  font-family: "Noto Sans CJK SC", "Liberation Sans", sans-serif; font-size: 12px; line-height: 16px; }
.defs { position: absolute; }
.page { position: relative; width: 1366px; height: 768px; display: flex; flex-direction: column; }
em { font-style: normal; }
i { display: block; font-style: normal; }

/* title */
.titlebar { height: 24px; background: #fff; display: flex; align-items: center; padding-left: 3px; flex: none; }
.appicon { width: 16px; height: 16px; margin-right: 4px; }
.title-text { font-size: 12.5px; letter-spacing: .06px; white-space: nowrap; }
.winctl { margin-left: auto; display: flex; gap: 33px; padding-right: 19px; }
.wc { width: 12px; height: 12px; }
.badge { position: absolute; left: 1014px; top: -25px; width: 43px; height: 43px; border-radius: 50%;
  background: #43ad4f; border: 1px solid #e4f2e4; box-shadow: 0 2px 3px rgba(0,0,0,.45); color: #fff; font-weight: 700;
  display: flex; justify-content: center; align-items: flex-end; padding-bottom: 1px; font-size: 12px; }

/* menu */
.menubar { height: 28px; flex: none; display: flex; align-items: center; position: relative; padding-left: 7px; }
.menus { display: flex; gap: 10.4px; width: 783px; overflow: hidden; white-space: nowrap; }
.menu-right { display: flex; align-items: center; gap: 8px; flex: 1; height: 100%; }
.notice { width: 187px; height: 26px; background: #f7f7f7; border-radius: 3px; color: #2f7d14; display: flex; align-items: center; justify-content: center; margin-left: -1px; }
.notice b { font-weight: 400; color: #1e5d0c; }
.account { flex: 1; height: 26px; background: #f7f7f7; border-radius: 3px; display: flex; align-items: center; padding-left: 3px; margin-left: -6px; gap: 3px; }
.phone { letter-spacing: .25px; }
.beans { margin-left: 5px; margin-right: 7px; }
.bell { width: 12px; height: 16px; }
.ime { position: absolute; left: 603px; top: 1px; width: 184px; height: 20px; background: #fff; border: 1px solid #c9dff2; display: flex; align-items: center; gap: 6px; padding-left: 12px; }
.ime-s { position: absolute; left: -21px; top: -3px; width: 30px; height: 27px; }
.ime-s-t { fill: #fff; font-size: 22px; font-weight: 700; text-anchor: middle; font-family: "Liberation Sans", sans-serif; }
.ime-s-t.small { font-size: 15px; }
.ime-zh { color: #1c7fd6; font-weight: 700; font-size: 14px; width: 14px; }
.ime-p { color: #1c7fd6; font-weight: 700; width: 12px; margin-right: 4px; }
.ime-i { width: 16px; height: 16px; flex: none; }

/* shared tools */
.chip { background: #f7f7f7; border-radius: 3px; display: flex; align-items: center; gap: 8px; }
.tool { display: flex; align-items: center; gap: 4px; white-space: nowrap; flex: none; }
.tool.off { color: #a6a6a6; }
.tool.mln2 { margin-left: -2px; }
.tool.mln3 { margin-left: -3px; }
.tool.ml1 { margin-left: 1px; }
.tool.ml2 { margin-left: 2px; }
.tool.ml3 { margin-left: 3px; }
.tool.newchg { gap: 1px; }
.tool.newchg .dd { margin-left: 6px; }
.tool.xiaoer { gap: 3px; margin-left: -2px; }
.ic { width: 16px; height: 16px; flex: none; }
.ic.big { width: 18px; height: 18px; }
.dd { width: 0; height: 0; border-left: 3px solid transparent; border-right: 3px solid transparent; border-top: 3px solid #1a1a1a; margin-left: 2px; flex: none; }
.dd.tight { margin-left: 0; }
.dd.grey { border-top-color: #888; margin-left: 3px; }
.sep { width: 1px; height: 19px; background: #c4c4c4; margin: 0 -2px; flex: none; }
.gripper { width: 2px; height: 18px; flex: none; margin: 0 -3px 0 1px; background-image: linear-gradient(#a8a8a8 50%, transparent 50%); background-size: 2px 4px; }
.more { margin-left: auto; font-size: 13px; font-weight: 700; line-height: 12px; align-self: flex-start; margin-top: 4px; flex: none; font-family: "Liberation Sans", sans-serif; }
.sigma { width: 16px; text-align: center; font-weight: 700; font-size: 14px; font-family: "Liberation Serif", serif; }
.ddbox { width: 13px; height: 100%; display: flex; align-items: center; justify-content: center; background: #f0f0f0; flex: none; }
.ddbox .dd { margin: 0; }

/* toolbar top */
.toolbar-top { height: 29px; flex: none; margin-top: 1px; margin-bottom: 2px; display: flex; gap: 1px; }
.c1 { width: 151px; padding: 0 6px 0 6px; }
.c2 { width: 549px; padding: 0 3px 0 5px; gap: 7px; }
.c3 { flex: 1; padding: 0 3px 0 4px; }
.sel2d { background: #fff; height: 26px; padding-left: 1px; width: 48px; }
.c3 .ddbox { height: 26px; margin-left: -8px; margin-right: -5px; }

/* main */
.main { height: 622px; flex: none; display: flex; }
.left { width: 254px; flex: none; margin-right: 5px; display: flex; flex-direction: column; padding-bottom: 1px; }
.panel-head { height: 16px; background: #0052d9; color: #fff; display: flex; align-items: center; padding-right: 6px; font-size: 13px; flex: none; }
.panel-head span { margin-right: auto; }
.pin { width: 10px; height: 10px; margin-left: 8px; }
.nav-btn { font: inherit; color: inherit; height: 22px; background: #f0f0f0; border: 1px solid #a6a6a6; border-left-color: #c8c8c8; padding: 0; flex: none; width: 254px; }
.nav-btn.cur { border: 2px solid #a6a6a6; border-left-width: 1px; border-right-width: 1px; }
.treebox { flex: 1; background: #fff; border: 1px solid #8c8c8c; display: flex; flex-direction: column; margin-top: 1px; margin-bottom: 1px; min-height: 0; }
.tree-tools { display: flex; gap: 7px; padding: 5px 0 0 6px; height: 28px; flex: none; }
.tt { width: 16px; height: 16px; }
.tree { display: flex; flex-direction: column; }
.tree em { font-size: 11px; font-family: "Liberation Mono", monospace; }
.row { height: 16px; display: flex; align-items: center; white-space: nowrap; position: relative; font-family: "Noto Sans CJK SC", sans-serif; }
.ti { width: 15px; height: 15px; flex: none; }
.folder { padding-left: 10px; }
.folder .ti { margin: 0 6px 0 9px; }
.folder .ti.cad { margin: 0 0 0 4px; }
.folder::before { content: ""; position: absolute; left: 22px; top: 8px; width: 3px; border-top: 1px dotted #888; }
.chev { width: 6px; height: 6px; border-top: 1.500px solid #777; border-right: 1.500px solid #777; transform: rotate(45deg); flex: none; }
.chev.down { transform: rotate(135deg); margin-top: -3px; border-color: #444; }
.child { padding-left: 45px; }
.child .ti { margin-right: 5px; }
.child::before { content: ""; position: absolute; left: 33px; top: 0; height: 16px; border-left: 1px dotted #888; }
.child.last::before { height: 9px; }
.child::after { content: ""; position: absolute; left: 33px; top: 8px; width: 11px; border-top: 1px dotted #888; }
.group { position: relative; }
.group::before { content: ""; position: absolute; left: 14px; top: 0; bottom: 8px; border-left: 1px dotted #888; }
.hl span { background: #d9d9d9; margin-left: -5px; padding-left: 5px; width: 75px; height: 16px; line-height: 16px; }
.new { font-family: "Liberation Sans", sans-serif; font-size: 9px; line-height: 9px; background: #ffd400; color: #2a2a2a; font-weight: 700; padding: 0 1px; align-self: flex-start; margin-top: -2px; }

/* right column */
.right { flex: 1; display: flex; flex-direction: column; min-width: 0; }
.rowa { height: 24px; width: 790px; margin-left: 1px; margin-bottom: 3px; padding-left: 4px; flex: none; }
.rowa .gripper { margin-right: -6px; }
.rowb { height: 26px; display: flex; gap: 3px; margin-left: 1px; margin-bottom: 3px; flex: none; }
.rowb1 { width: 638px; padding-left: 4px; gap: 3px; }
.rowb1 .tool { margin-left: 4px; }
.rowb2 { width: 421px; padding-left: 4px; }
.rowb2 .gripper { margin-right: -5px; }
.rowb2 .tool { gap: 3px; }
.rowb2 .dd { margin-left: 3px; }
.combo { width: 69px; height: 26px; background: #fff; display: flex; align-items: center; justify-content: space-between; padding-left: 1px; flex: none; white-space: nowrap; }
.rowb1 .combo:nth-child(2) { width: 57px; margin-left: 2px; }
.sep.b { margin: 0 0 0 1px; }
.rowc { height: 28px; display: flex; gap: 3px; margin-left: 1px; flex: none; }
.rowc1 { width: 1070px; padding: 0 3px 0 4px; }
.rowc1 .gripper { margin-right: -8px; }
.rowc1 .tool { gap: 3px; margin-right: -1px; }
.rowc1 .sep { margin: 0 -2px 0 0; }
.rowc1 > .dd { margin-left: 0; }
.rowc1 .tool.first { margin-right: -6px; }
.rowc1 .tool.vbtn { margin-left: -3px; margin-right: -2px; }
.rowc2 { flex: 1; padding-left: 4px; }
.xyic { margin-right: -2px; }
.btn { height: 23px; padding: 0 3px; border: 1px solid transparent; }
.btn.sel { border-color: #1e86d8; background: #dcebf8; }
.blank { width: 56px; height: 23px; background: #f7f7f7; border: 1px solid #9a9a9a; display: flex; align-items: center; justify-content: flex-end; padding-right: 5px; flex: none; margin: 0 -3px 0 -2px; }

.canvas { display: block; width: 1107px; height: 507px; flex: none; }
.canvas text { font-family: "Liberation Sans", sans-serif; }
.crisp { shape-rendering: crispEdges; }
.bigt { font-size: 33px; fill: #ececec; stroke: #ececec; stroke-width: .4; }
.gband { fill: #00e600; }
.glines path { fill: none; stroke: #078507; stroke-width: 1; }
.ticks path { fill: none; stroke: #078507; stroke-width: 1; }
.bubble circle { fill: none; stroke: #078507; stroke-width: 1; }
.blabel text { font-size: 15px; font-weight: 700; fill: #c4c4c4; text-anchor: middle; }
.dim text { font-size: 15px; fill: #d4d4d4; }
.wsolid { fill: none; stroke: #fff; stroke-width: 1; }
.wdash { fill: none; stroke: #fff; stroke-width: 4; stroke-dasharray: 8 8; }
.wdash2 { fill: none; stroke: #fff; stroke-width: 3; stroke-dasharray: 8 8; }
.wdiag { fill: none; stroke: #fff; stroke-width: 1.200; }
.wdiag2 { fill: none; stroke: #fff; stroke-width: 1; }
.rlines path { fill: none; stroke: #f00; stroke-width: 1.100; }
.rdiag { fill: none; stroke: #f00; stroke-width: 1; }
.blueline { fill: none; stroke: #1478e6; stroke-width: 1; }
.whitethin { fill: none; stroke: #fff; stroke-width: 1; }
.cyan { fill: none; stroke: #22e6e6; stroke-width: 1; }
.mg { fill: #e020d8; }
.mgs { fill: none; stroke: #e020d8; stroke-width: 1.500; }
.marks rect { fill: #e61fe0; }
.marks rect.bk { fill: #000; }
.marks rect.wt { fill: #fff; }
.ax-g { fill: none; stroke: #0f0; stroke-width: 5; }
.ax-gh { fill: #0f0; }
.ax-r { fill: none; stroke: #f00; stroke-width: 4; }
.ax-rh { fill: #f00; }
.ax-yl { fill: none; stroke: #0f0; stroke-width: 1; }
.ax-xl { fill: none; stroke: #f00; stroke-width: 1; }

/* snap */
.snapbar { height: 30px; flex: none; padding: 2px 0 0 215px; }
.snap { height: 27px; width: 671px; gap: 3px; }
.snap .gripper { margin: 0 2px 0 1px; }
.snap .gripper.g2 { margin: 0 -1px 0 7px; }
.snap .tool { gap: 3px; }
.snap .tool + .tool { margin-left: 1px; }
.snap .btn { height: 23px; width: 51px; padding: 0 3px; }
.snap .tool.join { margin-left: -3px; }
.snap .tool.coord { margin-left: 5px; }
.snap .sep { margin: 0 -1px 0 1px; }
.off-c { width: 58px; height: 24px; }
.lab { color: #666; flex: none; white-space: nowrap; }
.lab.y { margin-left: 2px; }
.lab.mm2 { margin-left: -3px; }
.spin { width: 58px; height: 24px; border: 1px solid #8a8a8a; display: flex; align-items: center; justify-content: flex-end; color: #8c8c8c; gap: 3px; padding-right: 3px; flex: none; }
.spin.w3 { width: 68px; margin-left: 1px; }
.arrows { display: flex; flex-direction: column; gap: 5px; width: 7px; }
.up, .dn { width: 0; height: 0; border-left: 3px solid transparent; border-right: 3px solid transparent; }
.up { border-bottom: 3px solid #444; }
.dn { border-top: 3px solid #444; }
.check { width: 11px; height: 11px; border: 1px solid #8a8a8a; background: #f7f7f7; margin-left: 1px; flex: none; }
.rotlab { margin-left: 6px; flex: none; white-space: nowrap; }

/* status */
.statusbar { height: 19px; flex: none; margin-top: 2px; margin-bottom: 1px; display: flex; gap: 2px; }
.cell { border: 1px solid #dadada; background: #f7f7f7; display: flex; align-items: center; padding-left: 1px; white-space: nowrap; flex: none; }
.cell em { font-family: "Liberation Mono", monospace; font-size: 10px; }
.s1 { width: 148px; } .s2 { width: 78px; } .s3 { width: 98px; } .s4 { width: 48px; } .s5 { flex: 1; } .s6 { width: 70px; }

/* taskbar */
.taskbar { height: 40px; flex: none; background: #071420; display: flex; align-items: center; color: #e6e6e6; }
.startbtn { width: 48px; height: 40px; background: #000; display: flex; align-items: center; justify-content: center; flex: none; }
.winlogo { width: 16px; height: 16px; }
.searchbox { width: 344px; height: 40px; background: #333; display: flex; align-items: center; padding-left: 11px; color: #9b9b9b; font-size: 13px; flex: none; }
.cortana { width: 20px; height: 20px; border: 3px solid #e8e8e8; border-radius: 50%; margin-right: 5px; flex: none; }
.mic { width: 12px; height: 18px; margin-left: auto; margin-right: 15px; }
.tasks { display: flex; align-items: center; height: 40px; flex: none; }
.task { width: 48px; height: 40px; display: flex; align-items: center; justify-content: center; flex: none; position: relative; }
.task.w52 { width: 52px; }
.task.w46 { width: 46px; }
.task.w66 { width: 66px; }
.task.w26 { width: 26px; margin-right: 12px; }
.task.acc::after { content: ""; position: absolute; left: 5px; right: 4px; bottom: 0; height: 2px; background: #76b9ed; }
.task.cur { background: #2a3a44; width: 47px; margin-left: 1px; }
.task.cur::after { left: 0; right: 0; }
.t18 { width: 20px; height: 18px; }
.t22 { width: 22px; height: 22px; }
.t24 { width: 24px; height: 24px; }
.link { margin-left: 13px; width: 28px; flex: none; color: #e0e0e0; }
.cpu { width: 60px; margin-left: 11px; display: flex; flex-direction: column; align-items: center; line-height: 16px; flex: none; }
.tray { display: flex; align-items: center; margin-left: 14px; gap: 8px; flex: none; }
.tr { width: 14px; height: 14px; flex: none; }
.tr.w15 { width: 15px; }
.tr.wifi { margin-left: 2px; }
.tr.kb { width: 23px; height: 15px; }
.tr.sg { width: 16px; height: 16px; margin-left: 3px; }
.chev-up { width: 12px; margin-right: 3px; }
.zh { font-size: 13px; color: #fff; margin: 0 3px; }
.clock { display: flex; flex-direction: column; align-items: flex-end; width: 60px; margin-left: 11px; line-height: 17px; font-size: 12.5px; flex: none; color: #e6e6e6; position: relative; z-index: 1; }
.notif { margin-left: -4px; width: 69px; height: 40px; background: #000; display: flex; align-items: center; justify-content: center; flex: none; }

/* highlight frames drawn over the toolbar */
.mark { position: absolute; border: 7px solid #0000f0; }
.m1 { left: 669px; top: 130px; width: 94px; height: 57px; }
.m2 { left: 801px; top: 123px; width: 79px; height: 51px; }
```
